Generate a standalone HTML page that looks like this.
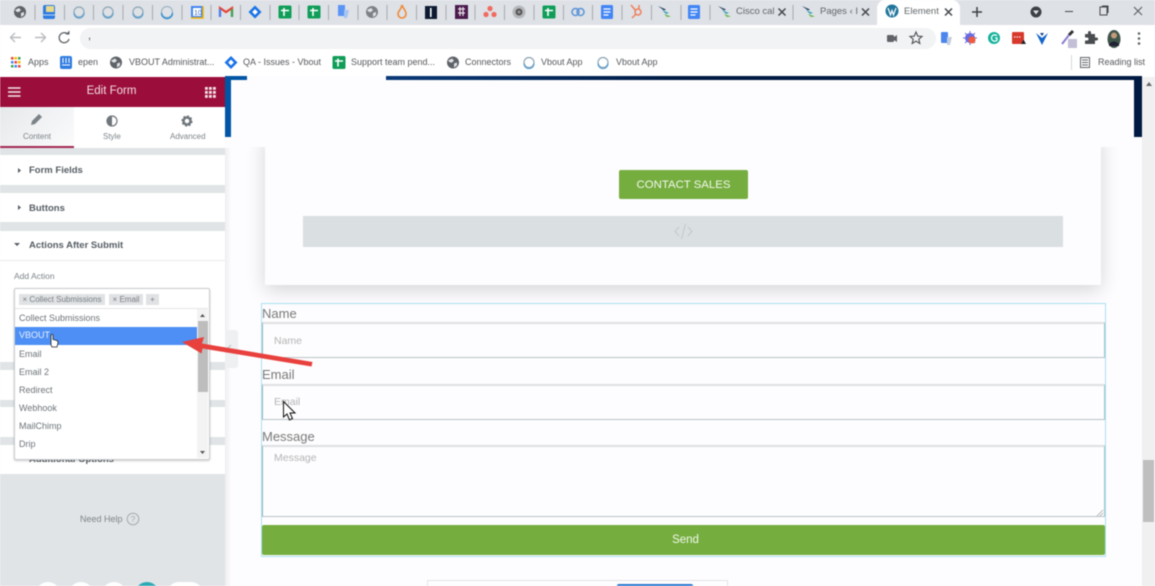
<!DOCTYPE html>
<html><head><meta charset="utf-8"><style>
html,body{margin:0;padding:0;width:1155px;height:586px;overflow:hidden;background:#fdfcfe;font-family:"Liberation Sans",sans-serif}
.a{position:absolute}
.t{position:absolute;white-space:nowrap;line-height:1}
#root{position:relative;width:1155px;height:586px;overflow:hidden;filter:blur(.45px)}
.sec{position:absolute;left:0;width:225px;background:#fff}
.sect{position:absolute;left:29px;font-size:9.5px;font-weight:bold;color:#565d63;white-space:nowrap;line-height:1}
.opt{position:absolute;left:19px;font-size:9px;color:#6d7479;white-space:nowrap;line-height:1}
.tag{position:absolute;top:294px;height:11px;background:#e0e2e4;color:#777e84;font-size:8px;line-height:11px;text-align:center;white-space:nowrap}
.lb{position:absolute;left:262px;font-size:13px;color:#7a7a7a;line-height:1}
.inp{position:absolute;left:262px;width:841px;background:#fdfcfe;border:1px solid #b9c4c8;border-top:2px solid #dde1e3;border-left-color:#9ab4c0;border-right-color:#9fc3d0}
.ph{position:absolute;left:274px;font-size:10.5px;color:#b5b5b5;line-height:1}
</style></head><body><div id="root">

<!-- browser chrome -->
<div class="a" style="left:0;top:0;width:1155px;height:25px;background:#dee1e6"></div>
<div class="a" style="left:0;top:25px;width:1155px;height:25px;background:#fff"></div>
<div class="a" style="left:0;top:50px;width:1155px;height:27px;background:#fff"></div>
<div class="a" style="left:80px;top:28px;width:856px;height:21px;border-radius:11px;background:#f1f3f4"></div>
<div class="a" style="left:877px;top:0;width:83px;height:26px;background:#fff;border-radius:8px 8px 0 0"></div>

<svg class="a" style="left:0;top:0" width="1155" height="77" viewBox="0 0 1155 77">
<defs>
<g id="globe"><circle r="6" fill="#5f6368"/><path d="M-5-2 L-1-4 L1-2 L-1 0 L-3 0Z M1 1 L4 0 L4 3 L1 5Z" fill="#dee1e6"/></g>
<g id="sheet"><rect x="-6.5" y="-6.5" width="13" height="13" rx="1.5" fill="#0f9d58"/><path d="M-4-1.5H4M-1-4V4" stroke="#fff" stroke-width="1.6"/></g>
<g id="doc"><rect x="-6" y="-7" width="12" height="14" rx="1.5" fill="#4285f4"/><path d="M-3.5-3H3.5M-3.5 0H3.5M-3.5 3H1.5" stroke="#fff" stroke-width="1.2"/></g>
<g id="ring"><circle r="5" fill="none" stroke="#8fa7b5" stroke-width="1.2"/><path d="M-5 1A5 5 0 0 0 5 1" fill="none" stroke="#5aa0d0" stroke-width="1.2"/></g>
<g id="wing"><path d="M-6-5L2-1.5L0-.5Z" fill="#1d3f5e"/><path d="M-2-1L5 2L2 3Z" fill="#3aa3b5"/><path d="M0 3L7 5.5L3 6Z" fill="#62b44a"/></g>
<g id="jira"><path d="M0-6.5L6.5 0L0 6.5L-6.5 0Z" fill="#1a73e8"/><rect x="-2" y="-2" width="4" height="4" fill="#fff" transform="rotate(45)"/></g>
</defs>
<g stroke="#a8abb0" stroke-width="1">
<path d="M35 5V20M64.500 5V20M93.500 5V20M123 5V20M152.500 5V20M182 5V20M211 5V20M240.500 5V20M270 5V20M299 5V20M328.500 5V20M358 5V20M387 5V20M416.500 5V20M446 5V20M475 5V20M504.500 5V20M534 5V20M563.500 5V20M592.500 5V20M622 5V20M651.500 5V20M681 5V20M710 5V20M793 5V20"/>
</g>
<g transform="translate(0,-1)">
<use href="#globe" x="20" y="13"/>
<rect x="43" y="6" width="12" height="14" rx="2" fill="#2f7de1"/><rect x="46" y="7" width="8" height="6" fill="#e9d98a"/><path d="M43 16H55" stroke="#bcd5f5"/>
<use href="#ring" x="79" y="13"/><use href="#ring" x="108" y="13"/><use href="#ring" x="138" y="13"/>
<circle cx="167" cy="13" r="5.500" fill="none" stroke="#9fb6c4" stroke-width="1.2"/><path d="M161.500 14A5.500 5.500 0 0 0 172.500 14" fill="none" stroke="#2f8fd3" stroke-width="1.400"/>
<rect x="191" y="7" width="12" height="12" fill="#4285f4"/><rect x="193" y="9" width="8" height="8" fill="#fff"/><path d="M191 19H203V7" fill="none" stroke="#f4b400" stroke-width="1.500"/><text x="194" y="16" font-family="Liberation Sans" font-size="7" fill="#3a6fc4">10</text>
<path d="M220 18V9L226 13L232 9V18" fill="none" stroke="#ea4335" stroke-width="2.200"/><path d="M220 18V10" stroke="#4285f4" stroke-width="2.200"/><path d="M232 18V10" stroke="#34a853" stroke-width="2.200"/>
<use href="#jira" x="255" y="13"/><use href="#sheet" x="285" y="13"/><use href="#sheet" x="314" y="13"/>
<path d="M338 6H345V17H338Z" fill="#5a95f5"/><path d="M344 11H349L347 19H344Z" fill="#a6c3f2"/>
<use href="#globe" x="372" y="13" opacity=".75"/>
<path d="M402 6C403 10 406 11 406 15A4 4 0 0 1 398 15C398 12 401 11 402 6Z" fill="none" stroke="#ef8a3c" stroke-width="1.600"/>
<rect x="425" y="7" width="12" height="13" fill="#0e1a33"/><rect x="430" y="9" width="1.600" height="9" fill="#fff"/>
<rect x="455" y="6" width="13" height="14" fill="#4a1a4c"/><path d="M458 10H465M458 14H465M460 8V17M463 8V17" stroke="#e8dfe8" stroke-width="1.200"/>
<circle cx="490" cy="9.500" r="2.600" fill="#f06a5f"/><circle cx="486" cy="15.500" r="2.600" fill="#f06a5f"/><circle cx="494" cy="15.500" r="2.600" fill="#f06a5f"/>
<circle cx="519" cy="13" r="6.500" fill="#b5b7ba"/><circle cx="519" cy="13" r="3.500" fill="#555"/><circle cx="519" cy="13" r="1.500" fill="#999"/>
<use href="#sheet" x="549" y="13"/>
<circle cx="575.500" cy="13" r="3.500" fill="none" stroke="#5a93d8" stroke-width="1.500"/><circle cx="580.500" cy="13" r="3.500" fill="none" stroke="#5a93d8" stroke-width="1.500"/>
<use href="#doc" x="607" y="13"/>
<path d="M631 6L636 12M632 19L636 15" stroke="#f0805a" stroke-width="1.500"/><circle cx="638" cy="13" r="3" fill="none" stroke="#f0805a" stroke-width="1.500"/><path d="M639 6V10" stroke="#f0805a" stroke-width="1.500"/>
<use href="#wing" x="664" y="12"/><use href="#doc" x="694" y="13"/><use href="#wing" x="724" y="12"/><use href="#wing" x="808" y="12"/>
<path d="M778.500 9.500L785.500 16.500M785.500 9.500L778.500 16.500M862 9.500L869 16.500M869 9.500L862 16.500M945 9.500L952 16.500M952 9.500L945 16.500" stroke="#44474b" stroke-width="1.500"/>
<circle cx="892" cy="12" r="6.500" fill="#21759b"/><path d="M888 9L890.500 16L892 11.500L893.500 16L896 9" fill="none" stroke="#fff" stroke-width="1.200"/>
<path d="M977 8V18M972 13H982" stroke="#3c4043" stroke-width="1.500"/>
<circle cx="1036" cy="13" r="5.500" fill="#3c4043"/><path d="M1033 11.500H1039L1036 15.500Z" fill="#dee1e6"/>
</g>
<path d="M1065 11.500H1073" stroke="#44474b" stroke-width="1"/>
<rect x="1100" y="7" width="7" height="8" fill="none" stroke="#44474b"/><path d="M1102 6H1108V13" fill="none" stroke="#44474b"/>
<path d="M1134 7L1142 15M1142 7L1134 15" stroke="#55585c" stroke-width="1"/>

<!-- toolbar -->
<g transform="translate(0,-4)">
<path d="M21 42.500H11M15 38L10.500 42.500L15 47" transform="translate(0,-1)" fill="none" stroke="#b9bcc0" stroke-width="1.400"/>
<path d="M35 41.500H45M41 37L45.500 41.500L41 46" fill="none" stroke="#b9bcc0" stroke-width="1.400"/>
<path d="M68 38.500A5 5 0 1 0 69 43" fill="none" stroke="#5f6368" stroke-width="1.300"/><path d="M65.500 38.500H69.500V34.500Z" fill="#5f6368"/>
<rect x="887" y="39" width="7" height="7" rx="1" fill="#5f6368"/><path d="M894 41L897 39V46L894 44Z" fill="#5f6368"/>
<path d="M916 36L917.800 40.200L922 40.500L918.800 43.200L919.800 47.500L916 45.200L912.200 47.500L913.200 43.200L910 40.500L914.200 40.200Z" fill="none" stroke="#4b4f54" stroke-width="1.100"/>
<rect x="941" y="36" width="7" height="11" rx="1" fill="#4a86ee"/><path d="M947 41H952L950 49H947Z" fill="#c4cfde"/>
<circle cx="970" cy="42" r="5" fill="#6a6ae0"/><path d="M970 35V49M963 42H977M965 37L975 47M975 37L965 47" stroke="#6a6ae0"/><circle cx="972" cy="44" r="3.500" fill="#ef5b3d"/>
<circle cx="994" cy="42" r="6" fill="#13b29a"/><path d="M997 39.800A3.200 3.200 0 1 0 997 44.200V42H995" fill="none" stroke="#fff" stroke-width="1.300"/>
<rect x="1012" y="36" width="12" height="12" rx="1" fill="#d73a2c"/><path d="M1014 41H1021" stroke="#fff" stroke-dasharray="1.500 1"/><path d="M1021 48L1023.500 43.500L1026 48Z" fill="#222"/>
<path d="M1036 37L1042 42L1048 37L1042 49Z" fill="#1565c9"/><path d="M1040 37H1044L1042 40Z" fill="#0e3f86"/>
<path d="M1062 48L1069 39" stroke="#8d7bd0" stroke-width="2"/><path d="M1069 39L1073 35" stroke="#333" stroke-width="3"/><rect x="1068" y="43" width="9" height="9" fill="#c2bfd6"/>
<path d="M1085 38H1088V36.500A1.500 1.500 0 0 1 1091 36.500V38H1095V41.500H1096.500A1.500 1.500 0 0 1 1096.500 44.500H1095V48H1085V44.500H1087A1.500 1.500 0 0 0 1087 41.500H1085Z" fill="#4a4d50"/>
<ellipse cx="1114" cy="43" rx="6.500" ry="9" fill="#3e5549"/><circle cx="1114" cy="39.500" r="3" fill="#c39a7c"/><path d="M1109 48Q1114 43 1119 48V50H1109Z" fill="#223"/>
<circle cx="1139" cy="37.500" r="1.300" fill="#5f6368"/><circle cx="1139" cy="42.500" r="1.300" fill="#5f6368"/><circle cx="1139" cy="47.500" r="1.300" fill="#5f6368"/>
</g>

<!-- bookmarks -->
<g fill="#4285f4"><rect x="11" y="57" width="2.500" height="2.500" fill="#ea4335"/><rect x="14.500" y="57" width="2.500" height="2.500" fill="#fbbc05"/><rect x="18" y="57" width="2.500" height="2.500" fill="#34a853"/><rect x="11" y="61" width="2.500" height="2.500"/><rect x="14.500" y="61" width="2.500" height="2.500" fill="#ea4335"/><rect x="18" y="61" width="2.500" height="2.500" fill="#fbbc05"/><rect x="11" y="65" width="2.500" height="2.500" fill="#34a853"/><rect x="14.500" y="65" width="2.500" height="2.500"/><rect x="18" y="65" width="2.500" height="2.500" fill="#ea4335"/></g>
<rect x="60" y="56" width="12" height="13" rx="2" fill="#2f7de1"/><path d="M63 58V63M66 58V63M69 58V63M62 65H70" stroke="#fff"/>
<use href="#globe" x="116" y="62.500"/>
<use href="#jira" x="231" y="62.500"/>
<use href="#sheet" x="339" y="62.500"/>
<use href="#globe" x="453" y="62.500"/>
<use href="#ring" x="529" y="62.500"/><use href="#ring" x="603" y="62.500"/>
<path d="M1071.500 55V70" stroke="#d5d7da"/>
<rect x="1080.500" y="57.500" width="9" height="10" fill="none" stroke="#5f6368"/><path d="M1082 60H1088M1082 62.500H1088M1082 65H1088" stroke="#5f6368"/>
</svg>

<div class="t" style="left:736px;top:7px;font-size:9.500px;color:#63676b">Cisco cal</div>
<div class="t" style="left:820px;top:7px;font-size:9.500px;color:#63676b">Pages &lsaquo; I</div>
<div class="t" style="left:904px;top:7px;font-size:9.500px;color:#63676b">Element</div>
<div class="t" style="left:88px;top:31px;font-size:11px;color:#555">,</div>
<div class="t" style="left:28px;top:58px;font-size:9px;color:#55585c">Apps</div>
<div class="t" style="left:78px;top:58px;font-size:9px;color:#55585c">epen</div>
<div class="t" style="left:129px;top:58px;font-size:9px;color:#55585c">VBOUT Administrat...</div>
<div class="t" style="left:243px;top:58px;font-size:9px;color:#55585c">QA - Issues - Vbout</div>
<div class="t" style="left:351px;top:58px;font-size:9px;color:#55585c">Support team pend...</div>
<div class="t" style="left:465px;top:58px;font-size:9px;color:#55585c">Connectors</div>
<div class="t" style="left:541px;top:58px;font-size:9px;color:#55585c">Vbout App</div>
<div class="t" style="left:616px;top:58px;font-size:9px;color:#55585c">Vbout App</div>
<div class="t" style="left:1098px;top:58px;font-size:9px;color:#55585c">Reading list</div>

<!-- page area -->
<div class="a" style="left:225px;top:77px;width:917px;height:509px;background:#fdfcfe"></div>
<div class="a" style="left:386px;top:76px;width:756px;height:4px;background:linear-gradient(90deg,#0a3a78,#001a42 40%,#001a42)"></div>
<div class="a" style="left:225px;top:76px;width:22px;height:4px;background:#0055a5"></div>
<div class="a" style="left:225px;top:76px;width:6px;height:61px;background:#0055a5"></div>
<div class="a" style="left:1134px;top:76px;width:8px;height:61px;background:#001a42"></div>
<div class="a" style="left:1142px;top:77px;width:13px;height:509px;background:#f0f0f0"></div>
<div class="a" style="left:1143px;top:460px;width:11px;height:62px;background:#bfbfbf"></div>
<div class="a" style="left:1146px;top:82px;width:0;height:0;border:3px solid transparent;border-bottom:4px solid #666;border-top:0"></div>

<!-- card -->
<div class="a" style="left:265px;top:130px;width:836px;height:155px;background:#fdfcfe;box-shadow:0 5px 18px rgba(0,0,0,.16)"></div>
<div class="a" style="left:232px;top:80px;width:902px;height:57px;background:#fdfcfe"></div>
<div class="a" style="left:231px;top:137px;width:911px;height:10px;background:#fdfcfe"></div>
<div class="a" style="left:619px;top:170px;width:129px;height:29px;border-radius:2px;background:#75ad3f;color:#f3f8ec;font-size:11.400px;line-height:30px;text-align:center">CONTACT SALES</div>
<div class="a" style="left:303px;top:216px;width:760px;height:31px;background:#dadfe2"></div>
<svg class="a" style="left:674px;top:223px" width="19" height="17" viewBox="0 0 19 17"><path d="M5 4L1 8.500L5 13M14 4L18 8.500L14 13M11.500 1L7.500 16" fill="none" stroke="#c3c8cc" stroke-width="1"/></svg>

<!-- form -->
<div class="a" style="left:261px;top:303px;width:843px;height:252px;border:1px solid #a9e2f0"></div>
<div class="lb" style="top:307px">Name</div>
<div class="inp" style="top:322px;height:33px"></div>
<div class="ph" style="top:336px">Name</div>
<div class="lb" style="top:368px">Email</div>
<div class="inp" style="top:384px;height:33px"></div>
<div class="ph" style="top:397px">Email</div>
<div class="lb" style="top:430px">Message</div>
<div class="inp" style="top:445px;height:69px"></div>
<div class="ph" style="top:453px">Message</div>
<svg class="a" style="left:1096px;top:509px" width="8" height="8"><path d="M1 7L7 1M4 7L7 4" stroke="#aaa" stroke-width=".8"/></svg>
<div class="a" style="left:262px;top:525px;width:843px;height:30px;border-radius:2px;background:#75ae3f;color:#f3f8ec;font-size:11.500px;line-height:29px;padding-top:0;text-align:center;text-indent:4px"><span style="position:relative;top:1px">Send</span></div>
<div class="a" style="left:427px;top:580px;width:299px;height:8px;border:1px solid #e3e3e5"></div>
<div class="a" style="left:617px;top:584px;width:76px;height:4px;background:#2a78d0;border-radius:2px 2px 0 0"></div>

<!-- sidebar -->
<div class="a" style="left:0;top:77px;width:225px;height:509px;background:#e1e4e6"></div>
<div class="a" style="left:225px;top:148px;width:6px;height:438px;background:linear-gradient(90deg,#eeeeef,#fdfcfe)"></div>
<div class="a" style="left:0;top:77px;width:225px;height:30px;background:#9b0e3b"></div>
<svg class="a" style="left:0;top:77px" width="225" height="30"><path d="M8 11H20.500M8 15H20.500M8 19H20.500" stroke="#f5e6ea" stroke-width="1.600"/><g fill="#f5e6ea"><rect x="205" y="10" width="2.800" height="2.800"/><rect x="209" y="10" width="2.800" height="2.800"/><rect x="213" y="10" width="2.800" height="2.800"/><rect x="205" y="14" width="2.800" height="2.800"/><rect x="209" y="14" width="2.800" height="2.800"/><rect x="213" y="14" width="2.800" height="2.800"/><rect x="205" y="18" width="2.800" height="2.800"/><rect x="209" y="18" width="2.800" height="2.800"/><rect x="213" y="18" width="2.800" height="2.800"/></g></svg>
<div class="t" style="left:0;top:86px;width:223px;text-align:center;font-size:11.500px;color:#f3dde3">Edit Form</div>
<div class="a" style="left:0;top:107px;width:225px;height:41px;background:#fff"></div>
<div class="a" style="left:0;top:107px;width:74px;height:39px;background:linear-gradient(135deg,#e6e9eb,#fbfbfc)"></div>
<div class="a" style="left:0;top:146px;width:74px;height:2px;background:#a42a52"></div>
<svg class="a" style="left:0;top:107px" width="225" height="40"><path d="M32 20L31 24L35 23L42 16L39 13Z" transform="translate(0,-6)" fill="#7c8388"/><circle cx="112" cy="14" r="5" fill="none" stroke="#6f767b" stroke-width="1.200"/><path d="M112 9A5 5 0 0 0 112 19Z" fill="#6f767b"/><circle cx="187" cy="14" r="3.500" fill="none" stroke="#6f767b" stroke-width="2.500"/><circle cx="187" cy="14" r="5" fill="none" stroke="#6f767b" stroke-width="1.200" stroke-dasharray="2 1.900"/></svg>
<div class="t" style="left:23px;top:133px;font-size:8px;color:#7d8489">Content</div>
<div class="t" style="left:103px;top:133px;font-size:8px;color:#7d8489">Style</div>
<div class="t" style="left:170px;top:133px;font-size:8px;color:#7d8489">Advanced</div>

<div class="sec" style="top:155px;height:30px"></div>
<div class="sect" style="top:165px;margin-top:1px">Form Fields</div>
<div class="sec" style="top:193px;height:29px"></div>
<div class="sect" style="top:204px">Buttons</div>
<div class="sec" style="top:231px;height:243px"></div>
<div class="a" style="left:0;top:260px;width:225px;height:1px;background:#e9ebed"></div>
<div class="sect" style="top:241px">Actions After Submit</div>
<svg class="a" style="left:0;top:150px" width="30" height="110"><path d="M18 18L21 20.500L18 23ZM18 55L21 57.500L18 60ZM14 93H20L17 96Z" fill="#565d63"/></svg>
<div class="t" style="left:14px;top:272px;font-size:8.500px;color:#7d8489">Add Action</div>
<div class="a" style="left:0;top:362px;width:225px;height:8px;background:#e1e4e6"></div>
<div class="a" style="left:0;top:400px;width:225px;height:7px;background:#e1e4e6"></div>
<div class="a" style="left:0;top:437px;width:225px;height:8px;background:#e1e4e6"></div>
<div class="sect" style="top:455px">Additional Options</div>

<div class="a" style="left:225px;top:330px;width:13px;height:38px;background:#eef0f1;border-radius:0 3px 3px 0"></div>
<svg class="a" style="left:226px;top:343px" width="8" height="10"><path d="M5 2L2 5L5 8" fill="none" stroke="#b9bdc0" stroke-width="1"/></svg>

<!-- dropdown -->
<div class="a" style="left:14px;top:288px;width:194px;height:170px;background:#fff;border:1px solid #c8ccd0;border-radius:2px;box-shadow:0 1px 2px rgba(0,0,0,.2)"></div>
<div class="a" style="left:15px;top:308px;width:193px;height:1px;background:#e4e6e8"></div>
<div class="tag" style="left:19px;width:86px">× Collect Submissions</div>
<div class="tag" style="left:109px;width:34px">× Email</div>
<div class="tag" style="left:146px;width:13px">+</div>
<div class="a" style="left:15px;top:327px;width:182px;height:18px;background:#4d8ff5"></div>
<div class="opt" style="top:313px;margin-top:1px">Collect Submissions</div>
<div class="opt" style="top:331px;color:#e9f1fe">VBOUT</div>
<div class="opt" style="top:350px">Email</div>
<div class="opt" style="top:368px">Email 2</div>
<div class="opt" style="top:386px">Redirect</div>
<div class="opt" style="top:404px">Webhook</div>
<div class="opt" style="top:422px">MailChimp</div>
<div class="opt" style="top:440px">Drip</div>
<div class="a" style="left:197px;top:309px;width:11px;height:149px;background:#f3f3f3"></div>
<div class="a" style="left:198px;top:321px;width:10px;height:71px;background:#bdbdbd"></div>
<svg class="a" style="left:197px;top:309px" width="11" height="149"><path d="M3 8H8L5.500 5ZM3 142H8L5.500 145Z" fill="#555"/></svg>

<div class="t" style="left:80px;top:515px;font-size:9px;color:#7d8489">Need Help</div>
<svg class="a" style="left:126px;top:512px" width="14" height="14"><circle cx="7" cy="7" r="5.800" fill="none" stroke="#a5aaae" stroke-width="1"/><text x="7" y="10" text-anchor="middle" font-family="Liberation Sans" font-size="8.500" fill="#a5aaae">?</text></svg>
<div class="a" style="left:36px;top:582px;width:24px;height:24px;border-radius:50%;background:#fff"></div>
<div class="a" style="left:69px;top:582px;width:24px;height:24px;border-radius:50%;background:#fff"></div>
<div class="a" style="left:102px;top:582px;width:24px;height:24px;border-radius:50%;background:#fff"></div>
<div class="a" style="left:135px;top:582px;width:24px;height:24px;border-radius:50%;background:#2eaab4"></div>
<div class="a" style="left:167px;top:582px;width:36px;height:24px;border-radius:12px;background:#fff"></div>

<!-- arrow + cursors -->
<svg class="a" style="left:0;top:0" width="1155" height="586">
<path d="M312.500 362L202 343.500L204 337L182 342L201.500 353.500L202.500 348.500L311.500 366.500Z" fill="#e8403c"/>
<path d="M51 345V335.500C51 334 53 334 53 335.500V339.500L57 340.500C58 341 58 342 58 343L57 347H52Z" fill="#fff" stroke="#222" stroke-width=".8"/>
<path d="M283.500 401.500V417L287 414L289.500 420L292.500 418.500L290 413H295Z" fill="#fff" stroke="#111" stroke-width="1"/>
</svg>
</div></body></html>
